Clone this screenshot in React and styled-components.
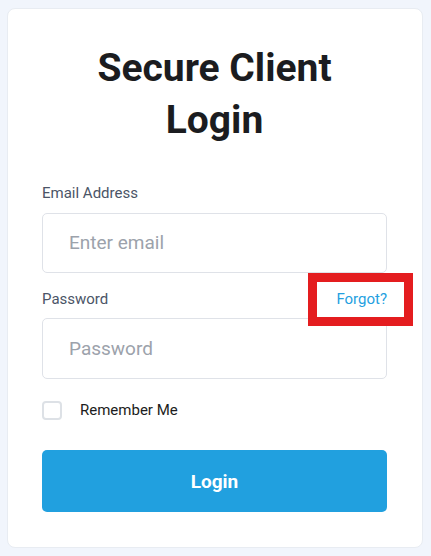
import React from "react";
import styled, { createGlobalStyle } from "styled-components";

const GlobalStyle = createGlobalStyle`
  body {
    margin: 0;
    background: #f1f5fc;
    font-family: Roboto, "Liberation Sans", Arial, sans-serif;
  }
  * { box-sizing: border-box; }
`;

const Page = styled.div`
  padding: 8px 8px 9px 7px;
`;

const Card = styled.form`
  width: 416px;
  background: #ffffff;
  border: 1px solid #e8ecf2;
  border-radius: 8px;
  padding: 33px 35px 35px 34px;
`;

const Title = styled.h1`
  margin: 0 0 36px;
  font-size: 39px;
  line-height: 52px;
  font-weight: 700;
  color: #1b1c20;
  text-align: center;
`;

const Field = styled.div`
  margin-bottom: ${(p) => p.$gap || 0}px;
`;

const LabelRow = styled.div`
  display: flex;
  justify-content: space-between;
  align-items: baseline;
  margin-bottom: 8px;
`;

const Label = styled.label`
  font-size: 15px;
  line-height: 22.5px;
  color: #4b5567;
`;

const Forgot = styled.a`
  position: relative;
  font-size: 15px;
  line-height: 22.5px;
  color: #259fdf;
  text-decoration: none;
`;

const Highlight = styled.span`
  position: absolute;
  left: -28px;
  right: -26px;
  top: -15px;
  bottom: -16px;
  border: 9px solid #e41d1f;
  pointer-events: none;
`;

const Input = styled.input`
  display: block;
  width: 100%;
  height: ${(p) => p.$h || 60}px;
  border: 1px solid #dfe2e8;
  border-radius: 5px;
  padding: 0 26px;
  font-family: inherit;
  font-size: 19px;
  color: #1b1c20;
  background: #fff;
  outline: none;
  &::placeholder {
    color: #9ca2ab;
  }
`;

const CheckRow = styled.label`
  display: flex;
  align-items: center;
  gap: 18px;
  height: 20px;
  margin: 21px 0 30px;
  font-size: 15px;
  color: #1b1c20;
`;

const Box = styled.span`
  width: 20px;
  height: 19px;
  border: 2px solid #dde1e6;
  border-radius: 4px;
  background: #fff;
`;

const Button = styled.button`
  display: block;
  width: 100%;
  height: 62px;
  border: none;
  border-radius: 5px;
  background: #21a0df;
  color: #ffffff;
  font-family: inherit;
  font-size: 19px;
  font-weight: 700;
`;

export default function App() {
  return (
    <Page>
      <GlobalStyle />
      <Card onSubmit={(e) => e.preventDefault()}>
        <Title>
          Secure Client
          <br />
          Login
        </Title>
        <Field $gap={15}>
          <LabelRow>
            <Label>Email Address</Label>
          </LabelRow>
          <Input type="email" placeholder="Enter email" />
        </Field>
        <Field>
          <LabelRow>
            <Label>Password</Label>
            <Forgot href="#">
              Forgot?
              <Highlight />
            </Forgot>
          </LabelRow>
          <Input type="password" placeholder="Password" $h={61} />
        </Field>
        <CheckRow>
          <Box />
          Remember Me
        </CheckRow>
        <Button type="submit">Login</Button>
      </Card>
    </Page>
  );
}
